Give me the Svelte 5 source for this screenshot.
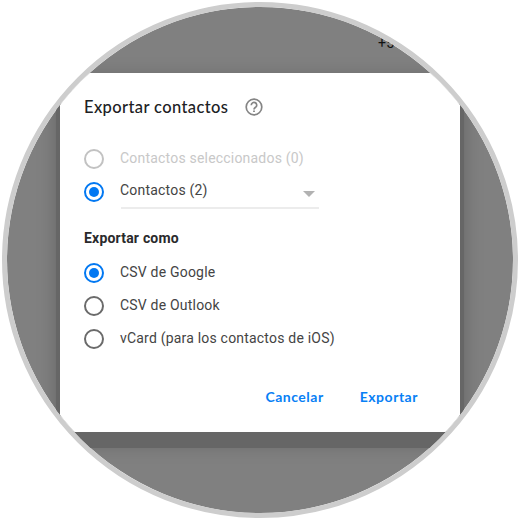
<style>
  :global(body) {
    margin: 0;
    background-color: #fff;
  }

  .lens {
    position: relative;
    box-sizing: border-box;
    width: 516px;
    height: 516px;
    margin: 2px;
    padding: 66px 53px;
    border: 5px solid #cdcdcd;
    border-radius: 50%;
    background-color: #808080;
    background-clip: padding-box;
    overflow: hidden;
    font-family: Roboto, sans-serif;
    font-size: 14px;
    letter-spacing: .2px;
    color: #444;
  }

  .phone {
    position: absolute;
    left: 371px;
    top: 28px;
    line-height: 16px;
    color: #111;
  }

  .dialog {
    position: relative;
    box-sizing: border-box;
    width: 400px;
    height: 359px;
    padding: 24px 24px 16px;
    background-color: #fff;
    box-shadow: 0 12px 0 4px #666, 0 8px 18px 4px rgba(0, 0, 0, .22);
  }

  header {
    display: flex;
    align-items: center;
    height: 20px;
  }

  h1 {
    width: 161px;
    margin: 0;
    font-family: Lato, sans-serif;
    font-size: 16.5px;
    font-weight: 500;
    letter-spacing: .38px;
    line-height: 20px;
    white-space: nowrap;
    color: #202124;
  }

  .help {
    width: 18px;
    height: 18px;
  }

  .scope {
    margin-top: 25px;
  }

  .option {
    display: flex;
    align-items: center;
    height: 33px;
    cursor: pointer;
  }

  .option input {
    position: absolute;
    opacity: 0;
    pointer-events: none;
  }

  .radio {
    display: flex;
    align-items: center;
    justify-content: center;
    box-sizing: border-box;
    width: 20px;
    height: 20px;
    margin-right: 16px;
    border: 2px solid #6b6b6b;
    border-radius: 50%;
  }

  .checked .radio {
    border-color: #0278f2;
  }

  .checked .radio::after {
    content: "";
    width: 10px;
    height: 10px;
    border-radius: 50%;
    background-color: #0278f2;
  }

  .label {
    line-height: 18px;
    padding-bottom: 2px;
    white-space: nowrap;
  }

  .disabled {
    color: #c8c8c8;
    cursor: default;
  }

  .disabled .radio {
    border-color: #c2c2c2;
  }

  .select {
    display: flex;
    align-items: center;
    justify-content: space-between;
    box-sizing: border-box;
    width: 198px;
    height: 35px;
    padding-right: 4px;
    border-bottom: 2px solid #ececec;
    margin-left: 1px;
  }

  .select .label {
    margin-left: -1px;
    padding-bottom: 2px;
  }

  .arrow {
    width: 12px;
    height: 6px;
    margin-top: 6px;
  }

  h2 {
    margin: 20px 0 8px;
    font-size: 14px;
    font-weight: 700;
    line-height: 20px;
    color: #2a2a2c;
  }

  footer {
    display: flex;
    justify-content: flex-end;
    gap: 36px;
    padding-right: 18px;
    margin-top: 32px;
  }

  button {
    padding: 0;
    border: none;
    background: none;
    font-family: Lato, sans-serif;
    font-size: 14px;
    font-weight: 700;
    letter-spacing: .52px;
    line-height: 20px;
    color: #0880f5;
    cursor: pointer;
  }
</style>

<script>
let scope = $state("all")
let format = $state("google")

const formats = [
  { id: "google", label: "CSV de Google" },
  { id: "outlook", label: "CSV de Outlook" },
  { id: "vcard", label: "vCard (para los contactos de iOS)" }
]
</script>

<div class="lens">
  <span class="phone">+5</span>

  <div class="dialog">
    <header>
      <h1>Exportar contactos</h1>
      <svg class="help" viewBox="0 0 18 18" fill="none" stroke="#858585">
        <circle cx="9" cy="9" r="7.8" stroke-width="1.7" />
        <path d="M6.3 7.2a2.7 2.7 0 1 1 4.4 2C9.7 10 9 10.3 9 11.5" stroke-width="1.7" />
        <path d="M9 12.4v1.7" stroke-width="1.8" />
      </svg>
    </header>

    <div class="scope">
      <label class="option disabled">
        <input type="radio" name="scope" value="selected" bind:group={scope} disabled />
        <span class="radio"></span>
        <span class="label">Contactos seleccionados (0)</span>
      </label>
      <label class="option" class:checked={scope === "all"}>
        <input type="radio" name="scope" value="all" bind:group={scope} />
        <span class="radio"></span>
        <span class="select">
          <span class="label">Contactos (2)</span>
          <svg class="arrow" viewBox="0 0 12 6">
            <path d="M0 0h12L6 6z" fill="#b2b2b2" />
          </svg>
        </span>
      </label>
    </div>

    <h2>Exportar como</h2>
    {#each formats as item}
      <label class="option" class:checked={format === item.id}>
        <input type="radio" name="format" value={item.id} bind:group={format} />
        <span class="radio"></span>
        <span class="label">{item.label}</span>
      </label>
    {/each}

    <footer>
      <button type="button">Cancelar</button>
      <button type="button">Exportar</button>
    </footer>
  </div>
</div>
